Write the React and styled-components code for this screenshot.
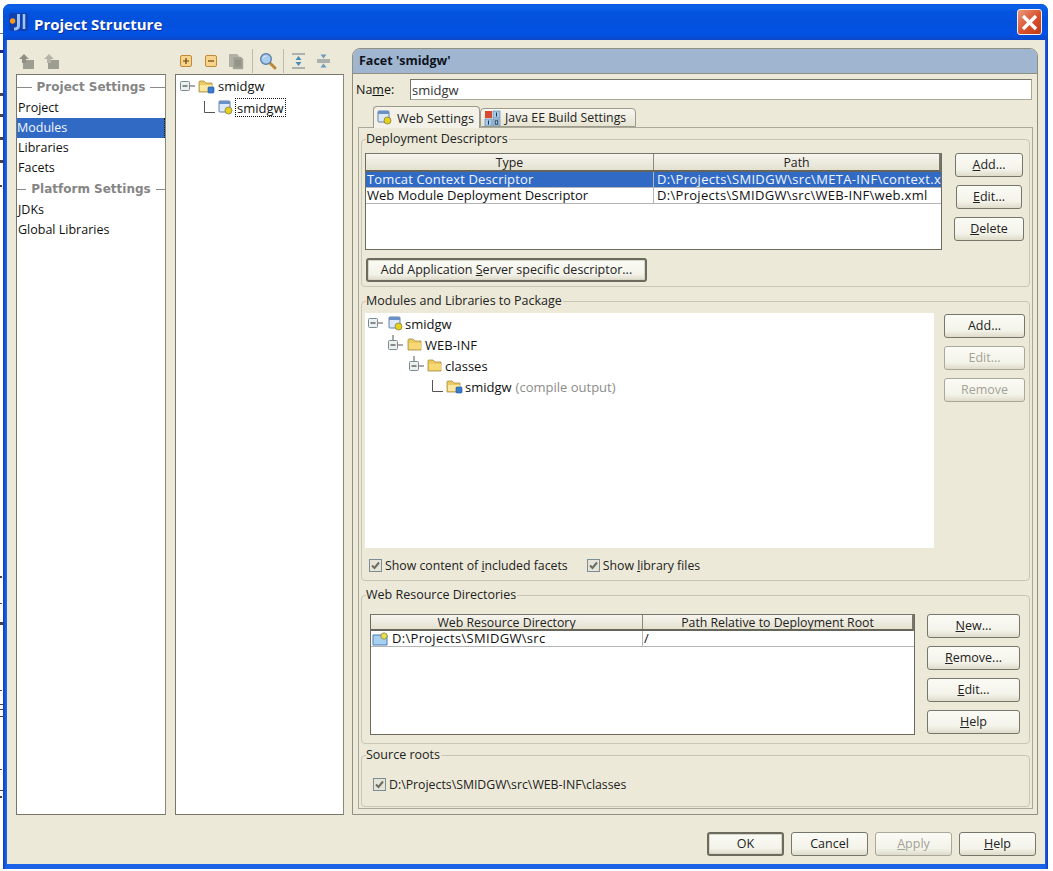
import React from 'react';
import styled, { createGlobalStyle } from 'styled-components';

const Global = createGlobalStyle`
  html, body { margin: 0; padding: 0; background: #fff; }
  body { font-family: "Open Sans", "Liberation Sans", sans-serif; font-size: 13px; color: #111; }
  #root { width: 1053px; height: 871px; overflow: hidden; }
`;

const Page = styled.div`position: relative; width: 1053px; height: 871px; padding: 4px 0 0 3px; box-sizing: border-box; background: #fff;`;
const Scrap = styled.i`position: absolute; left: 0; top: ${p => p.$y}px; width: ${p => p.$w || 3}px; height: ${p => p.$h || 2}px; background: ${p => p.$c || '#444'};`;
const Win = styled.div`
  width: 1045px; height: 865px; display: flex; flex-direction: column; box-sizing: border-box;
  border-radius: 7px 7px 0 0; padding: 0 3px 5px 4px;
  background: linear-gradient(90deg, #0a3bc4 0, #1a62e6 3px, #1a62e6 calc(100% - 3px), #0a3bc4 100%);
`;
const TitleBar = styled.div`
  height: 36px; margin: 0 -3px 0 -4px; padding: 0 5px 0 6px; display: flex; align-items: center; gap: 5px; flex: none;
  border-radius: 7px 7px 0 0;
  background: linear-gradient(180deg, #0a5ae0 0, #0c62e8 3px, #0454e0 8px, #0250dc 20px, #0352e4 30px, #0a48c8 36px);
`;
const TitleText = styled.div`flex: 1; color: #fff; font: bold 15px "Open Sans", sans-serif; text-shadow: 1px 1px 0 #0a2f9c; padding-top: 3px;`;
const CloseBtn = styled.div`
  width: 25px; height: 26px; margin: 0 1px 0 0; box-sizing: border-box; border: 1px solid #f4f0ee; border-radius: 3px; display: flex; align-items: center; justify-content: center;
  background: linear-gradient(135deg, #ea9a80, #d8502c 55%, #c03a16);
`;
const Client = styled.div`flex: 1; background: #ece9d8; display: flex; flex-direction: column; padding: 8px 7px 0 9px; min-height: 0;`;
const Main = styled.div`display: flex; height: 767px; flex: none;`;
const Col = styled.div`display: flex; flex-direction: column; width: ${p => p.$w}px; margin-right: ${p => p.$mr || 0}px; flex: none;`;
const Toolbar = styled.div`height: 26px; display: flex; align-items: center; flex: none; margin-left: -2px;`;
const Tool = styled.span`display: flex; width: 25px; justify-content: center;`;
const ToolSep = styled.span`width: 1px; height: 24px; background: #bdbaa8; margin: 0 2px 0 ${p => p.$ml || 4}px;`;
const WhiteBox = styled.div`flex: 1; background: #fff; border: 1px solid #77766a; border-right-color: #8a8979; padding-top: 1px; min-height: 0;`;
const NavRow = styled.div`height: 20px; line-height: 20px; font-size: 12.5px; padding-left: 1px; box-sizing: border-box; ${p => p.$sel && 'background:#316ac5;color:#f2f6ff;padding-left:0;border-right:1px dotted #111;'}`;
const NavSep = styled.div`height: ${p => p.$h || 22}px; display: flex; align-items: center; gap: 5px; color: #858585; font: bold 12px "DejaVu Sans", sans-serif;
  &::before, &::after { content: ""; flex: 1; height: 1px; background: #8a8a8a; }`;
const TreeRow = styled.div`height: ${p => p.$h || 21}px; display: flex; align-items: center; padding-left: ${p => p.$pl}px; white-space: nowrap;`;
const TreeGap = styled.span`display: inline-flex; width: ${p => p.$w}px; flex: none; justify-content: flex-start;`;
const TreeLabel = styled.span`margin-left: ${p => p.$ml || 3}px;`;
const Focus = styled.span`border: 1px dotted #111; padding: 0 1px; margin-left: 2px; height: 19px; line-height: 18px; box-sizing: border-box;`;
const Muted = styled.span`color: #8c8c8c; margin-left: 4px;`;
const Panel = styled.div`flex: 1; display: flex; flex-direction: column; border: 1px solid #8f8e80; border-radius: 8px 8px 0 0; min-height: 0;`;
const PanelHead = styled.div`height: 24px; line-height: 23px; flex: none; padding-left: 6px; background: #9fb5d0; border-bottom: 1px solid #8f8e80; border-radius: 7px 7px 0 0; font-weight: bold; font-size: 12.5px; color: #10131c;`;
const NameRow = styled.div`display: flex; align-items: center; height: 21px; margin-top: 5px; padding: 0 5px 0 3px; flex: none;`;
const NameLabel = styled.label`width: 54px; flex: none; font-size: 12.5px;`;
const NameInput = styled.div`flex: 1; height: 21px; line-height: 20px; box-sizing: border-box; background: #fff; border: 1px solid #77766a; border-bottom-color: #a9a898; border-right-color: #a9a898; padding-left: 1px; color: #333;`;
const Tabs = styled.div`display: flex; align-items: flex-end; height: 21px; margin-top: 6px; padding-left: 20px; flex: none; position: relative; z-index: 1;`;
const Tab = styled.div`
  display: flex; align-items: center; gap: ${p => p.$active ? 5 : 4}px; box-sizing: border-box; width: ${p => p.$w}px; height: ${p => p.$active ? 22 : 19}px; padding-left: 3px;
  white-space: nowrap; font-size: ${p => p.$active ? 12.7 : 12.3}px; color: #222;
  border: 1px solid #9b9a8b; border-radius: 4px 4px 0 0; background: ${p => p.$active ? '#f4f2e8' : 'linear-gradient(#f8f7f0,#e6e3d2)'};
  ${p => p.$active ? 'border-bottom: 0; margin-bottom:-1px;' : ''}
`;
const TabPanel = styled.div`flex: 1; margin: 0 4px 5px 5px; border: 1px solid #a9a89a; padding: 4px 2px 0; display: flex; flex-direction: column; min-height: 0;`;
const Group = styled.fieldset`
  margin: 0 0 ${p => p.$mb ?? 7}px; padding: ${p => p.$pt || 7}px 3px 0; height: ${p => p.$h}px; box-sizing: border-box; flex: none; min-width: 0;
  border: 1px solid #c9c6b5; border-radius: 4px;
`;
const Legend = styled.legend`padding: 0 1px 0 0; margin-left: 1px; line-height: 14px; height: 14px; font-size: 12.5px; color: #222;`;
const GroupRow = styled.div`display: flex; align-items: flex-start; padding-left: ${p => p.$pl || 0}px;`;
const Table = styled.div`width: ${p => p.$w}px; height: ${p => p.$h}px; flex: none; box-sizing: border-box; background: #fff; border: 1px solid #6c6b5e; border-top: 0; overflow: hidden;`;
const THead = styled.div`display: grid; grid-template-columns: ${p => p.$cols}; height: ${p => p.$h}px; box-sizing: border-box; background: linear-gradient(#f6f5ee, #e4e1d0); border-top: 1px solid #77766a; border-bottom: 2px solid #66655a; border-right: 2px solid #77766a;`;
const Th = styled.div`text-align: center; line-height: ${p => p.$lh || 18}px; font-size: 12.3px; color: #222; border-right: ${p => p.$last ? 0 : '1px solid #8a8979'}; overflow: hidden; white-space: nowrap;`;
const TRow = styled.div`display: grid; grid-template-columns: ${p => p.$cols}; height: 16px; box-sizing: border-box; border-bottom: 1px solid #b5b5b5; ${p => p.$sel && 'background:#316ac5;color:#f0f5ff;'}`;
const Td = styled.div`padding-left: ${p => p.$pl || 1}px; line-height: 15px; display: flex; align-items: center; gap: 3px; white-space: nowrap; overflow: hidden; letter-spacing: ${p => p.$sp || 0}px; border-right: ${p => p.$last ? 0 : '1px solid #b5b5b5'};`;
const Btn = styled.div`
  box-sizing: border-box; width: ${p => p.$w}px; height: 24px; line-height: 21px; text-align: center; flex: none;
  border: 1px solid #77766a; border-radius: 3px; font-size: 12.5px; color: ${p => p.$off ? '#a3a296' : '#222'};
  ${p => p.$off ? 'border-color:#a9a89a;' : ''}
  background: linear-gradient(#fbfbf6, #f4f3ea 70%, #dedbc9);
  ${p => p.$def ? 'border: 2px solid #6c6b5e; box-shadow: inset 0 0 0 1px #d8d6c6; line-height: 19px;' : ''}
`;
const BtnCol = styled.div`display: flex; flex-direction: column; align-items: center; gap: 8px; width: ${p => p.$w}px; margin: ${p => p.$mt || 0}px 0 0 ${p => p.$ml}px; flex: none;`;
const AppBtnWrap = styled.div`margin: 8px 0 0 1px;`;
const ModulesTree = styled.div`width: 569px; height: 235px; background: #fff; flex: none; box-sizing: border-box;`;
const Checks = styled.div`display: flex; gap: 19px; margin: 9px 0 0 4px; height: 16px;`;
const Check = styled.label`display: flex; align-items: center; gap: 3px; white-space: nowrap; font-size: 12.3px; color: #222;`;
const SourceRow = styled.div`margin: 13px 0 0 8px;`;
const Footer = styled.div`display: flex; justify-content: flex-end; gap: 7px; padding: 17px 2px 0 0;`;
const U = styled.span`text-decoration: underline; text-underline-offset: 1px;`;

const Logo = () => (
  <svg width="20" height="20" viewBox="0 0 20 20">
    <rect x="0" y="1" width="19" height="18" rx="3" fill="#123fae" />
    <circle cx="3.6" cy="9" r="2.7" fill="#f59a18" />
    <path d="M9.5 2v11.5q0 3.5-4.5 3.5" fill="none" stroke="#9cc4f8" strokeWidth="3" />
    <path d="M15 2v15" fill="none" stroke="#9cc4f8" strokeWidth="2.6" />
  </svg>
);
const X = () => (
  <svg width="17" height="17" viewBox="0 0 17 17"><path d="M2 2l13 13M15 2L2 15" stroke="#fff" strokeWidth="3.4" /></svg>
);
const Up = ({ flip }) => (
  <svg width="17" height="17" viewBox="0 0 17 17">
    <path d="M5 7h11v9H5z" fill="#9d9d92" />
    <path d="M1 6l5-5 5 5H8v4H4V6z" fill={flip ? '#b4b4a8' : '#8f8f84'} />
  </svg>
);
const Plus = ({ minus }) => (
  <svg width="14" height="14" viewBox="0 0 14 14">
    <rect x="1.5" y="1.5" width="11" height="11" rx="1.5" fill="#f6d48c" stroke="#c08a3a" />
    <path d={minus ? 'M4 7h6' : 'M4 7h6M7 4v6'} stroke="#6a4010" strokeWidth="1.2" />
  </svg>
);
const Doc = () => (
  <svg width="16" height="17" viewBox="0 0 16 17">
    <path d="M1 1h8l2 2v11H1z" fill="#b0b0a4" /><path d="M5 4h8l2 2v10H5z" fill="#9d9d92" stroke="#b8b8ac" strokeWidth=".6" />
    <path d="M7 8h6M7 10h6M7 12h6" stroke="#85857a" strokeWidth=".8" />
  </svg>
);
const Search = () => (
  <svg width="18" height="18" viewBox="0 0 18 18">
    <path d="M11 11l5 5" stroke="#b98a3a" strokeWidth="3" strokeLinecap="round" />
    <circle cx="7" cy="7" r="5.3" fill="#a8cdf0" stroke="#5f7fa8" strokeWidth="1.4" />
    <path d="M4 6q1-2 3-2" stroke="#eaf4ff" fill="none" />
  </svg>
);
const ExpandAll = () => (
  <svg width="15" height="16" viewBox="0 0 15 16">
    <path d="M1 1h13M1 15h13" stroke="#6a7a84" /><path d="M7.5 3l3 4h-6zM7.5 13l3-4h-6z" fill="#4b8bb8" />
  </svg>
);
const CollapseAll = () => (
  <svg width="15" height="16" viewBox="0 0 15 16">
    <path d="M1 7h13M1 9h13" stroke="#6a7a84" /><path d="M7.5 5.5l3-4h-6zM7.5 10.5l3 4h-6z" fill="#6b9cc0" />
  </svg>
);
const Expander = () => (
  <svg width="16" height="11" viewBox="0 0 16 11">
    <rect x=".5" y=".5" width="9" height="9" rx="1" fill="#eef0ee" stroke="#7a8c98" />
    <path d="M2.5 5h5" stroke="#222" /><path d="M10 5h5" stroke="#555" />
  </svg>
);
const ChildExpander = () => (
  <svg width="16" height="19" viewBox="0 0 16 19">
    <path d="M5 0v5" stroke="#555" />
    <rect x=".5" y="5.5" width="9" height="9" rx="1" fill="#eef0ee" stroke="#7a8c98" />
    <path d="M2.5 10h5" stroke="#222" /><path d="M10 10h5" stroke="#555" />
  </svg>
);
const Elbow = () => (
  <svg width="12" height="13" viewBox="0 0 12 13"><path d="M1.5 0v11.5H12" fill="none" stroke="#555" /></svg>
);
const Folder = ({ badge, open }) => (
  <svg width="17" height="15" viewBox="0 0 17 15">
    <path d="M1 3q0-1 1-1h4l2 2h6v9H1z" fill="#eec95f" stroke="#a68e45" strokeWidth=".8" />
    <path d="M2 6h12v6H2z" fill={open ? '#f9e8a4' : '#f6d874'} />
    {badge && <rect x="10" y="8" width="6" height="6" rx="1" fill="#3a7cd0" stroke="#1d4f96" strokeWidth=".6" />}
  </svg>
);
const ModuleIcon = () => (
  <svg width="15" height="15" viewBox="0 0 15 15">
    <rect x="1" y="1" width="11" height="11" rx="1" fill="#dfe8f6" stroke="#5f80b0" />
    <rect x="1" y="1" width="11" height="3" fill="#6a90c8" />
    <circle cx="10.5" cy="10.5" r="3.5" fill="#e8d020" stroke="#5a6a30" strokeWidth=".6" />
  </svg>
);
const GridIcon = () => (
  <svg width="17" height="16" viewBox="0 0 17 16">
    <rect x="1" y="1" width="7" height="7" fill="#d84a30" />
    <rect x="9" y="1" width="7" height="7" fill="#a8c8e8" stroke="#4e7ca8" strokeWidth=".6" />
    <rect x="1" y="9" width="7" height="7" fill="#a8c8e8" stroke="#4e7ca8" strokeWidth=".6" />
    <rect x="9" y="9" width="7" height="7" fill="#a8c8e8" stroke="#4e7ca8" strokeWidth=".6" />
    <path d="M12.5 2.5v4M4.5 10.5v4" stroke="#234" strokeWidth="1" />
    <rect x="11.2" y="10.8" width="2.6" height="3.4" fill="none" stroke="#234" strokeWidth=".9" />
  </svg>
);
const WebDir = () => (
  <svg width="17" height="14" viewBox="0 0 17 14">
    <path d="M1 3h14v10H1z" fill="#a8d0f0" stroke="#4a7cb0" />
    <circle cx="12" cy="4" r="3.2" fill="#e8dc50" stroke="#6a7030" strokeWidth=".6" />
  </svg>
);
const Box = () => (
  <svg width="13" height="13" viewBox="0 0 13 13">
    <rect x=".5" y=".5" width="12" height="12" fill="#e6e4d8" stroke="#7b8d95" />
    <path d="M3 6.5l2.5 2.5L10 3.5" fill="none" stroke="#6c6c62" strokeWidth="2" />
  </svg>
);

const scraps = [[33, 3, 1, '#777'], [50, 3, 3, '#1a2a80'], [93, 3, 3], [114, 3, 3], [137, 3, 3], [160, 3, 3], [185, 2, 2], [576, 2, 2],
  [603, 2, 1], [622, 3, 3], [690, 2, 1], [704, 3, 1], [709, 3, 1], [716, 3, 1], [769, 2, 1], [790, 3, 1], [796, 2, 2]];
const deployCols = '288px 1fr';
const webCols = '272px 1fr';

export default function App() {
  return (
    <Page>
      <Global />
      {scraps.map(([y, w, h, c]) => <Scrap key={y} $y={y} $w={w} $h={h} $c={c} />)}
      <Win>
        <TitleBar>
          <Logo />
          <TitleText>Project Structure</TitleText>
          <CloseBtn><X /></CloseBtn>
        </TitleBar>
        <Client>
          <Main>
            <Col $w={150} $mr={9}>
              <Toolbar>
                <Tool><Up /></Tool>
                <Tool><Up flip /></Tool>
              </Toolbar>
              <WhiteBox>
                <NavSep>Project Settings</NavSep>
                <NavRow>Project</NavRow>
                <NavRow $sel>Modules</NavRow>
                <NavRow>Libraries</NavRow>
                <NavRow>Facets</NavRow>
                <NavSep>Platform Settings</NavSep>
                <NavRow>JDKs</NavRow>
                <NavRow>Global Libraries</NavRow>
              </WhiteBox>
            </Col>
            <Col $w={169} $mr={8}>
              <Toolbar>
                <Tool><Plus /></Tool>
                <Tool><Plus minus /></Tool>
                <Tool><Doc /></Tool>
                <ToolSep $ml={4} />
                <Tool><Search /></Tool>
                <ToolSep $ml={3} />
                <Tool><ExpandAll /></Tool>
                <Tool><CollapseAll /></Tool>
              </Toolbar>
              <WhiteBox>
                <TreeRow $pl={4} $h={20}>
                  <TreeGap $w={18}><Expander /></TreeGap><Folder badge open /><TreeLabel>smidgw</TreeLabel>
                </TreeRow>
                <TreeRow $pl={27} $h={22}>
                  <TreeGap $w={15}><Elbow /></TreeGap><ModuleIcon /><Focus>smidgw</Focus>
                </TreeRow>
              </WhiteBox>
            </Col>
            <Panel>
              <PanelHead>Facet 'smidgw'</PanelHead>
              <NameRow>
                <NameLabel>Na<U>m</U>e:</NameLabel>
                <NameInput>smidgw</NameInput>
              </NameRow>
              <Tabs>
                <Tab $active $w={107}><ModuleIcon /><span>Web Settings</span></Tab>
                <Tab $w={156}><GridIcon /><span>Java EE Build Settings</span></Tab>
              </Tabs>
              <TabPanel>
                <Group $h={155}>
                  <Legend>Deployment Descriptors</Legend>
                  <GroupRow>
                    <div>
                      <Table $w={577} $h={97}>
                        <THead $cols={deployCols} $h={19}><Th>Type</Th><Th $last>Path</Th></THead>
                        <TRow $cols={deployCols} $sel><Td $sp={0.15}>Tomcat Context Descriptor</Td><Td $last $pl={3} $sp={0.33}>D:\Projects\SMIDGW\src\META-INF\context.xml</Td></TRow>
                        <TRow $cols={deployCols}><Td>Web Module Deployment Descriptor</Td><Td $last $pl={3} $sp={0.3}>D:\Projects\SMIDGW\src\WEB-INF\web.xml</Td></TRow>
                      </Table>
                      <AppBtnWrap>
                        <Btn $w={281} $def>Add Application <U>S</U>erver specific descriptor...</Btn>
                      </AppBtnWrap>
                    </div>
                    <BtnCol $w={70} $ml={12}>
                      <Btn $w={68}><U>A</U>dd...</Btn>
                      <Btn $w={66}><U>E</U>dit...</Btn>
                      <Btn $w={70}><U>D</U>elete</Btn>
                    </BtnCol>
                  </GroupRow>
                </Group>
                <Group $h={287} $pt={5}>
                  <Legend>Modules and Libraries to Package</Legend>
                  <GroupRow>
                    <ModulesTree>
                      <TreeRow $pl={3}><TreeGap $w={20}><Expander /></TreeGap><ModuleIcon /><TreeLabel $ml={2}>smidgw</TreeLabel></TreeRow>
                      <TreeRow $pl={23}><TreeGap $w={19}><ChildExpander /></TreeGap><Folder /><TreeLabel $ml={1}>WEB-INF</TreeLabel></TreeRow>
                      <TreeRow $pl={44}><TreeGap $w={18}><ChildExpander /></TreeGap><Folder /><TreeLabel $ml={1}>classes</TreeLabel></TreeRow>
                      <TreeRow $pl={66}><TreeGap $w={15}><Elbow /></TreeGap><Folder badge open /><TreeLabel $ml={2}>smidgw</TreeLabel><Muted>(compile output)</Muted></TreeRow>
                    </ModulesTree>
                    <BtnCol $w={81} $ml={10} $mt={1}>
                      <Btn $w={81}>Add...</Btn>
                      <Btn $w={81} $off>Edit...</Btn>
                      <Btn $w={81} $off>Remove</Btn>
                    </BtnCol>
                  </GroupRow>
                  <Checks>
                    <Check><Box /><span>Show content of <U>i</U>ncluded facets</span></Check>
                    <Check><Box /><span>Show <U>l</U>ibrary files</span></Check>
                  </Checks>
                </Group>
                <Group $h={156} $mb={4} $pt={12}>
                  <Legend>Web Resource Directories</Legend>
                  <GroupRow $pl={5}>
                    <Table $w={545} $h={121}>
                      <THead $cols={webCols} $h={17}><Th $lh={15}>Web Resource Directory</Th><Th $last $lh={15}>Path Relative to Deployment Root</Th></THead>
                      <TRow $cols={webCols}><Td $sp={0.3}><WebDir />D:\Projects\SMIDGW\src</Td><Td $last>/</Td></TRow>
                    </Table>
                    <BtnCol $w={93} $ml={12}>
                      <Btn $w={93}><U>N</U>ew...</Btn>
                      <Btn $w={93}><U>R</U>emove...</Btn>
                      <Btn $w={93}><U>E</U>dit...</Btn>
                      <Btn $w={93}><U>H</U>elp</Btn>
                    </BtnCol>
                  </GroupRow>
                </Group>
                <Group $h={59} $mb={0} $pt={1}>
                  <Legend>Source roots</Legend>
                  <SourceRow><Check><Box /><span>D:\Projects\SMIDGW\src\WEB-INF\classes</span></Check></SourceRow>
                </Group>
              </TabPanel>
            </Panel>
          </Main>
          <Footer>
            <Btn $w={77} $def>OK</Btn>
            <Btn $w={77}>Cancel</Btn>
            <Btn $w={77} $off><U>A</U>pply</Btn>
            <Btn $w={77}><U>H</U>elp</Btn>
          </Footer>
        </Client>
      </Win>
    </Page>
  );
}
